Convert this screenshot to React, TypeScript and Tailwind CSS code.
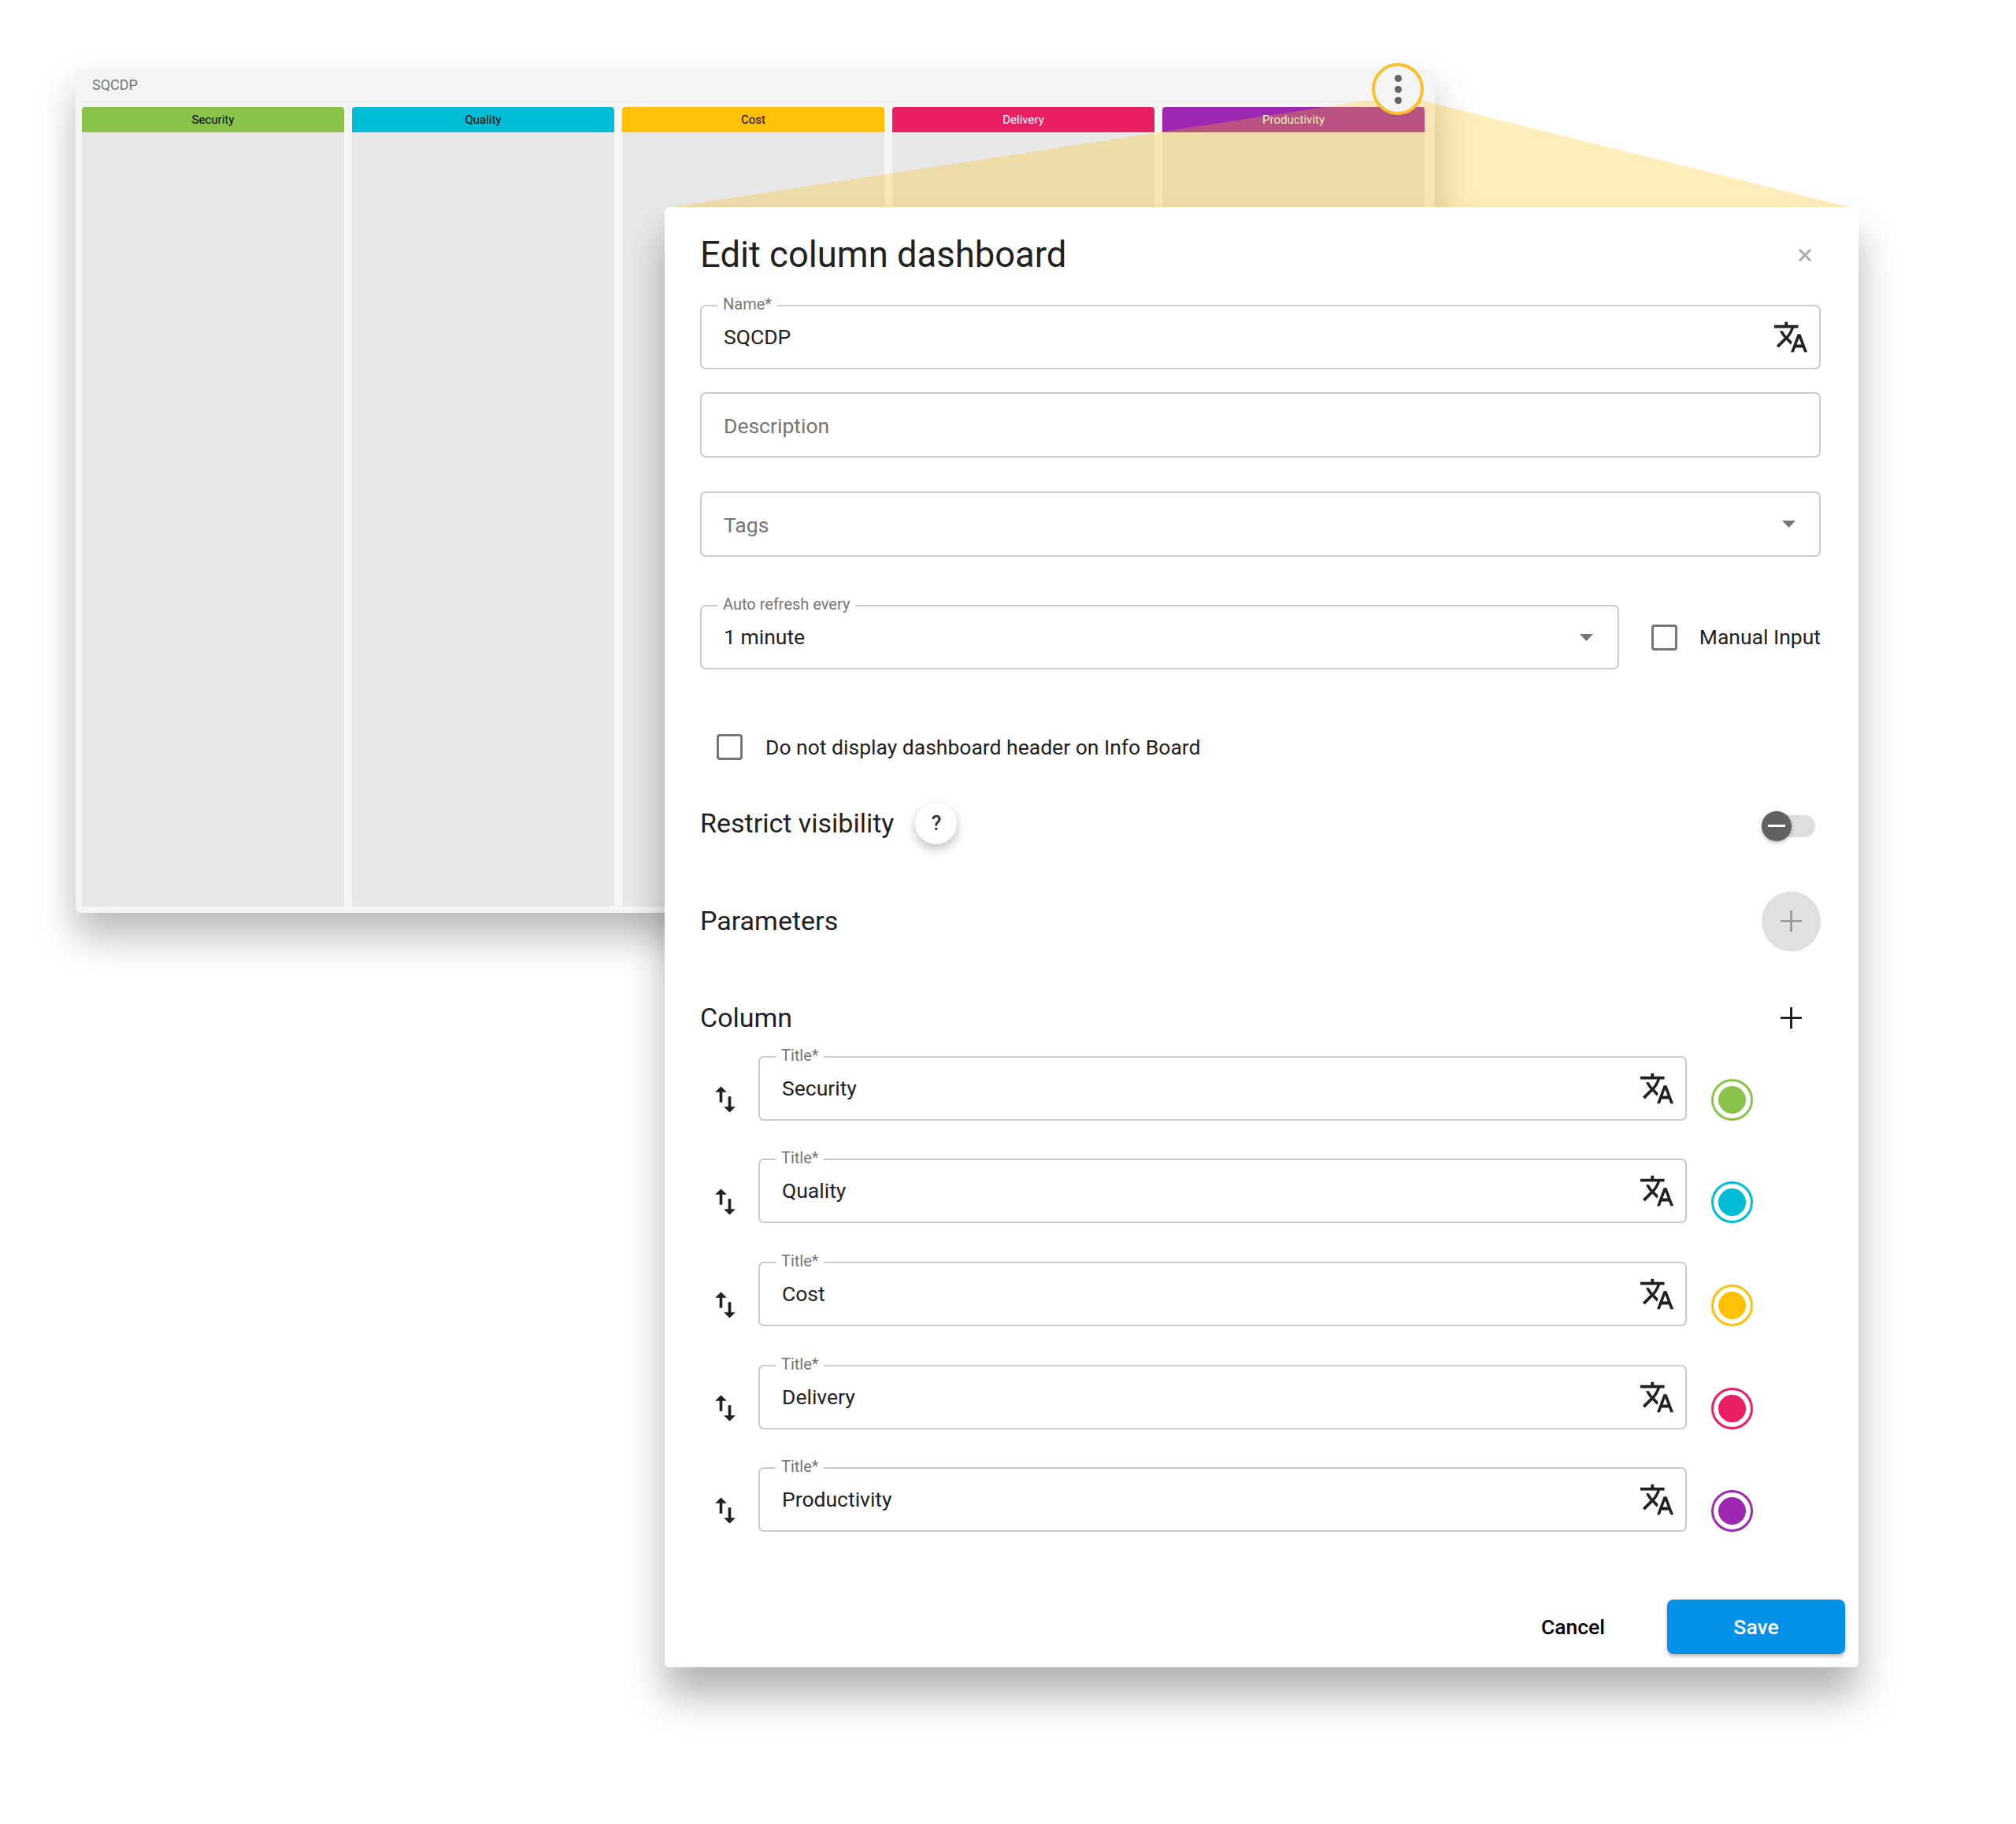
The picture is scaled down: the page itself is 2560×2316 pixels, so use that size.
import { ReactNode } from 'react';

const COLUMNS = [
  { title: 'Security', head: 'bg-[#8bc34a]', text: 'text-black', ring: 'border-[#8bc34a]', dot: 'bg-[#8bc34a]' },
  { title: 'Quality', head: 'bg-[#00bcd4]', text: 'text-black', ring: 'border-[#00bcd4]', dot: 'bg-[#00bcd4]' },
  { title: 'Cost', head: 'bg-[#ffc107]', text: 'text-black', ring: 'border-[#ffc107]', dot: 'bg-[#ffc107]' },
  { title: 'Delivery', head: 'bg-[#e91e63]', text: 'text-white', ring: 'border-[#e91e63]', dot: 'bg-[#e91e63]' },
  { title: 'Productivity', head: 'bg-[#9c27b0]', text: 'text-white', ring: 'border-[#9c27b0]', dot: 'bg-[#9c27b0]' },
];

function TranslateIcon() {
  return (
    <svg viewBox="0 0 24 24" className="w-[46px] h-[46px] fill-[#212121] shrink-0">
      <path d="M12.87 15.07l-2.54-2.51.03-.03c1.74-1.94 2.98-4.17 3.71-6.53H17V4h-7V2H8v2H1v1.99h11.17C11.5 7.92 10.44 9.75 9 11.35 8.07 10.32 7.3 9.19 6.69 8h-2c.73 1.63 1.73 3.17 2.98 4.56l-5.09 5.02L4 19l5-5 3.11 3.11.76-2.04zM18.5 10h-2L12 22h2l1.12-3h4.75L21 22h2l-4.5-12zm-2.62 7l1.62-4.33L19.12 17h-3.24z" />
    </svg>
  );
}

function SwapIcon() {
  return (
    <svg viewBox="0 0 24 24" className="w-[44px] h-[44px] fill-[#212121]">
      <path d="M16 17.01V10h-2v7.01h-3L15 21l4-3.99h-3zM9 3L5 6.99h3V14h2V6.99h3L9 3z" />
    </svg>
  );
}

function Caret() {
  return (
    <svg viewBox="0 0 17 9" className="w-[17px] h-[9px] fill-[#757575] shrink-0">
      <path d="M0 0h17L8.500 9z" />
    </svg>
  );
}

function PlusIcon({ className }: { className: string }) {
  return (
    <svg viewBox="0 0 27 27" className={`w-[27px] h-[27px] ${className}`}>
      <path d="M12 0h3v12h12v3H15v12h-3V15H0v-3h12z" />
    </svg>
  );
}

function Field({
  label,
  value,
  placeholder,
  right,
  className,
}: {
  label?: string;
  value?: string;
  placeholder?: string;
  right?: ReactNode;
  className: string;
}) {
  return (
    <div className={`relative flex items-center border-2 border-[#cbcbcb] rounded-[7px] pl-[28px] ${className}`}>
      {label && (
        <span className="absolute left-[20px] top-[-14px] bg-white px-[7px] text-[20px] leading-[23px] text-[#757575]">
          {label}
        </span>
      )}
      {value && <span className="flex-1 text-[26.500px] text-[#212121]">{value}</span>}
      {placeholder && <span className="flex-1 pt-[3px] text-[26.500px] text-[#757575]">{placeholder}</span>}
      {right}
    </div>
  );
}

function CheckBox() {
  return <div className="w-[33px] h-[33px] border-[3px] border-[#757575] rounded-[4px] shrink-0" />;
}

function Board() {
  return (
    <div className="absolute left-[96px] top-[87px] w-[1726px] h-[1072px] bg-[#f5f5f5] rounded-[6px] flex flex-col shadow-[0_30px_50px_rgba(0,0,0,0.28)]">
      <div className="mx-[10px] h-[43px] border-b-2 border-[#eeeeee] flex items-center pl-[11px] text-[18px] text-[#757575]">
        SQCDP
      </div>
      <div className="flex-1 flex gap-[10.200px] pl-[8px] pr-[13px] pt-[6px] pb-[8px]">
        {COLUMNS.map((col) => (
          <div key={col.title} className="flex-1 flex flex-col bg-[#e8e8e8]">
            <div className={`h-[32px] rounded-t-[4px] flex items-center justify-center text-[15px] ${col.head} ${col.text}`}>
              {col.title}
            </div>
          </div>
        ))}
      </div>
    </div>
  );
}

function Callout() {
  return (
    <>
      <svg viewBox="0 0 2560 300" className="absolute left-0 top-0 w-[2560px] h-[300px] pointer-events-none">
        <polygon points="852,263 1732,128 1807,128 2348,263" fill="#ffc107" fillOpacity="0.28" />
      </svg>
      <div className="absolute left-[1742px] top-[80px] w-[66px] h-[66px] rounded-full border-4 border-[#fbc02d] bg-[#f5f5f5] flex flex-col items-center justify-center gap-[5px]">
        <div className="w-[9px] h-[9px] rounded-full bg-[#666666]" />
        <div className="w-[9px] h-[9px] rounded-full bg-[#666666]" />
        <div className="w-[9px] h-[9px] rounded-full bg-[#666666]" />
      </div>
    </>
  );
}

function Dialog() {
  return (
    <div className="absolute left-[844px] top-[263px] w-[1516px] h-[1854px] bg-white rounded-[6px] shadow-[0_36px_50px_rgba(0,0,0,0.3)] pl-[45px] pr-[48px] flex flex-col font-['Roboto',sans-serif]">
      <div className="h-[124px] flex items-start justify-between">
        <h1 className="mt-[31px] text-[45.400px] leading-[60px] text-[#212121] font-normal">Edit column dashboard</h1>
        <svg viewBox="0 0 16 16" className="w-[16px] h-[16px] mt-[53px] mr-[12px] stroke-[#a8a8a8] fill-none">
          <path d="M1 1l14 14M15 1L1 15" strokeWidth="3" />
        </svg>
      </div>

      <Field label="Name*" value="SQCDP" className="h-[82px] pr-[13px]" right={<TranslateIcon />} />
      <Field placeholder="Description" className="h-[83px] mt-[29px]" />
      <Field placeholder="Tags" className="h-[83px] mt-[43px] pr-[30px]" right={<Caret />} />

      <div className="mt-[61px] flex items-center justify-between">
        <Field label="Auto refresh every" value="1 minute" className="h-[82px] w-[1167px] pr-[31px]" right={<Caret />} />
        <div className="flex items-center gap-[28px]">
          <CheckBox />
          <span className="text-[26.500px] text-[#212121]">Manual Input</span>
        </div>
      </div>

      <div className="mt-[79px] ml-[21px] flex items-center gap-[29px]">
        <CheckBox />
        <span className="text-[26.500px] text-[#212121]">Do not display dashboard header on Info Board</span>
      </div>

      <div className="mt-[50px] h-[54px] flex items-center">
        <span className="text-[34px] font-normal text-[#212121]">Restrict visibility</span>
        <div className="ml-[27px] w-[53px] h-[53px] rounded-full bg-white flex items-center justify-center text-[26px] font-medium text-[#333333] shadow-[0_6px_14px_rgba(0,0,0,0.25)]">
          ?
        </div>
        <div className="relative ml-auto mr-[7px] mt-[6px] w-[68px] h-[28px] rounded-full bg-[#dedede]">
          <div className="absolute left-0 top-[-5px] w-[38px] h-[38px] rounded-full bg-[#616161] flex items-center justify-center shadow-[0_2px_4px_rgba(0,0,0,0.3)]">
            <div className="w-[22px] h-[3px] bg-white" />
          </div>
        </div>
      </div>

      <div className="mt-[59px] flex items-center justify-between">
        <span className="text-[34px] font-normal text-[#212121]">Parameters</span>
        <div className="w-[75px] h-[76px] rounded-full bg-[#e0e0e0] flex items-center justify-center">
          <PlusIcon className="fill-[#9e9e9e]" />
        </div>
      </div>

      <div className="mt-[64px] h-[42px] flex items-center justify-between">
        <span className="text-[34px] font-normal text-[#212121]">Column</span>
        <div className="mr-[24px]">
          <PlusIcon className="fill-[#212121]" />
        </div>
      </div>

      <div className="mt-[27px] flex flex-col gap-[48.600px]">
        {COLUMNS.map((col) => (
          <div key={col.title} className="flex items-start">
            <div className="w-[74px] pl-[10px] pt-[33px]">
              <SwapIcon />
            </div>
            <Field label="Title*" value={col.title} className="w-[1179px] h-[82px] pr-[13px]" right={<TranslateIcon />} />
            <div className={`ml-[31px] mt-[29px] w-[53px] h-[53px] rounded-full border-[3px] bg-white flex items-center justify-center ${col.ring}`}>
              <div className={`w-[35px] h-[35px] rounded-full ${col.dot}`} />
            </div>
          </div>
        ))}
      </div>

      <div className="mt-[86px] mr-[-31px] flex items-center justify-end">
        <span className="mr-[79px] text-[26.500px] font-medium text-black">Cancel</span>
        <div className="w-[226px] h-[69px] rounded-[8px] bg-[#0391e8] flex items-center justify-center text-[26.500px] font-medium text-white shadow-[0_3px_5px_rgba(0,0,0,0.3)]">
          Save
        </div>
      </div>
    </div>
  );
}

export default function App() {
  return (
    <div className="relative w-[2560px] h-[2316px] bg-white overflow-hidden font-['Roboto',sans-serif]">
      <Board />
      <Callout />
      <Dialog />
    </div>
  );
}
